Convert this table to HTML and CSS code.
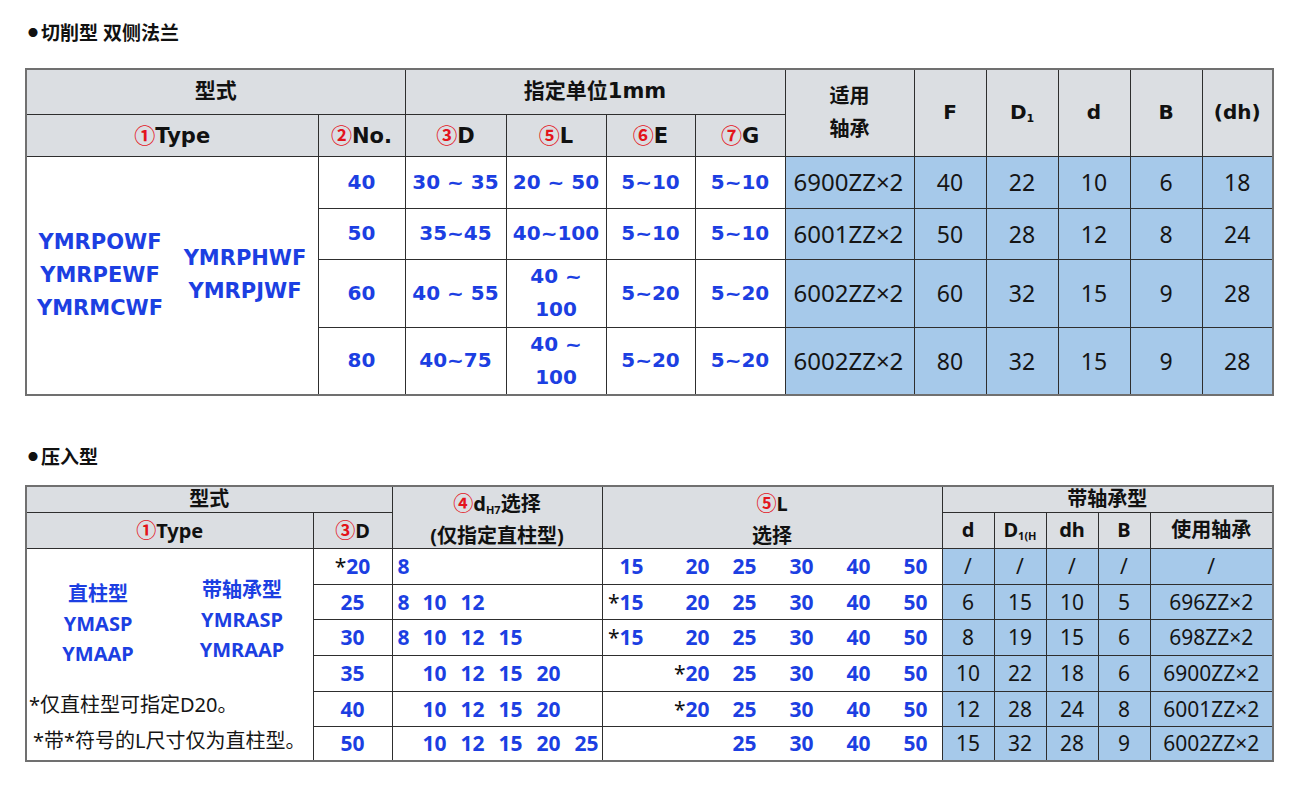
FILE: index.html
```html
<!DOCTYPE html>
<html lang="zh">
<head>
<meta charset="utf-8">
<title>切削型 双侧法兰 / 压入型</title>
<link rel="stylesheet" href="styles.css">
</head>
<body>
<div class="page">
  <div class="title"><span class="dot">●</span>切削型 双侧法兰</div>
  <table class="t1">
    <colgroup>
      <col class="c-type"><col class="c-no"><col class="c-d"><col class="c-l"><col class="c-e"><col class="c-g"><col class="c-bear"><col class="c-s"><col class="c-s"><col class="c-s"><col class="c-s"><col class="c-s2">
    </colgroup>
    <tr class="h1">
      <th colspan="2">型式</th>
      <th colspan="4">指定单位1mm</th>
      <th rowspan="2" class="two">适用<br>轴承</th>
      <th rowspan="2">F</th>
      <th rowspan="2">D<sub>1</sub></th>
      <th rowspan="2">d</th>
      <th rowspan="2">B</th>
      <th rowspan="2">(dh)</th>
    </tr>
    <tr class="h2">
      <th><span class="num">①</span>Type</th>
      <th><span class="num">②</span>No.</th>
      <th><span class="num">③</span>D</th>
      <th><span class="num">⑤</span>L</th>
      <th><span class="num">⑥</span>E</th>
      <th><span class="num">⑦</span>G</th>
    </tr>
    <tr class="r1">
      <td rowspan="4" class="models">
        <div class="mgrid">
          <div class="mcol left">YMRPOWF<br>YMRPEWF<br>YMRMCWF</div>
          <div class="mcol right">YMRPHWF<br>YMRPJWF</div>
        </div>
      </td>
      <td class="v">40</td><td class="v">30 ~ 35</td><td class="v">20 ~ 50</td><td class="v">5~10</td><td class="v">5~10</td>
      <td class="bear">6900ZZ×2</td><td class="b">40</td><td class="b">22</td><td class="b">10</td><td class="b">6</td><td class="b">18</td>
    </tr>
    <tr class="r2">
      <td class="v">50</td><td class="v">35~45</td><td class="v">40~100</td><td class="v">5~10</td><td class="v">5~10</td>
      <td class="bear">6001ZZ×2</td><td class="b">50</td><td class="b">28</td><td class="b">12</td><td class="b">8</td><td class="b">24</td>
    </tr>
    <tr class="r3">
      <td class="v">60</td><td class="v">40 ~ 55</td><td class="v tall">40 ~<br>100</td><td class="v">5~20</td><td class="v">5~20</td>
      <td class="bear">6002ZZ×2</td><td class="b">60</td><td class="b">32</td><td class="b">15</td><td class="b">9</td><td class="b">28</td>
    </tr>
    <tr class="r3">
      <td class="v">80</td><td class="v">40~75</td><td class="v tall">40 ~<br>100</td><td class="v">5~20</td><td class="v">5~20</td>
      <td class="bear">6002ZZ×2</td><td class="b">80</td><td class="b">32</td><td class="b">15</td><td class="b">9</td><td class="b">28</td>
    </tr>
  </table>

  <div class="title second"><span class="dot small">●</span>压入型</div>
  <table class="t2">
    <colgroup>
      <col class="k-type"><col class="k-d"><col class="k-dh"><col class="k-l"><col class="k-s"><col class="k-s"><col class="k-s"><col class="k-s"><col class="k-bear">
    </colgroup>
    <tr class="g1">
      <th colspan="2">型式</th>
      <th rowspan="2" class="two"><div class="stack"><span class="num">④</span>d<sub>H7</sub>选择<br>(仅指定直柱型)</div></th>
      <th rowspan="2" class="two"><div class="stack"><span class="num">⑤</span>L<br>选择</div></th>
      <th colspan="5">带轴承型</th>
    </tr>
    <tr class="g2">
      <th><span class="num">①</span>Type</th>
      <th><span class="num">③</span>D</th>
      <th>d</th>
      <th>D<sub>1(H</sub></th>
      <th>dh</th>
      <th>B</th>
      <th>使用轴承</th>
    </tr>
    <tr class="q36">
      <td rowspan="6" class="types">
        <div class="tbox">
          <div class="tmodels">
            <div class="tcol tleft">直柱型<br>YMASP<br>YMAAP</div>
            <div class="tcol tright">带轴承型<br>YMRASP<br>YMRAAP</div>
          </div>
          <div class="note n1">*仅直柱型可指定D20。</div>
          <div class="note n2">*带*符号的L尺寸仅为直柱型。</div>
        </div>
      </td>
      <td class="dv"><span class="star">*</span>20</td>
      <td class="dh"><div class="dgrid"><span>8</span></div></td>
      <td class="lv"><div class="lgrid"><span>15</span><span>20</span><span>25</span><span>30</span><span>40</span><span>50</span></div></td>
      <td class="b2">/</td><td class="b2">/</td><td class="b2">/</td><td class="b2">/</td><td class="b2">/</td>
    </tr>
    <tr class="q35">
      <td class="dv">25</td>
      <td class="dh"><div class="dgrid"><span>8</span><span>10</span><span>12</span></div></td>
      <td class="lv"><div class="lgrid"><span><i class="star">*</i>15</span><span>20</span><span>25</span><span>30</span><span>40</span><span>50</span></div></td>
      <td class="b2">6</td><td class="b2">15</td><td class="b2">10</td><td class="b2">5</td><td class="b2">696ZZ×2</td>
    </tr>
    <tr class="q36">
      <td class="dv">30</td>
      <td class="dh"><div class="dgrid"><span>8</span><span>10</span><span>12</span><span>15</span></div></td>
      <td class="lv"><div class="lgrid"><span><i class="star">*</i>15</span><span>20</span><span>25</span><span>30</span><span>40</span><span>50</span></div></td>
      <td class="b2">8</td><td class="b2">19</td><td class="b2">15</td><td class="b2">6</td><td class="b2">698ZZ×2</td>
    </tr>
    <tr class="q36">
      <td class="dv">35</td>
      <td class="dh"><div class="dgrid"><span></span><span>10</span><span>12</span><span>15</span><span>20</span></div></td>
      <td class="lv"><div class="lgrid"><span></span><span><i class="star">*</i>20</span><span>25</span><span>30</span><span>40</span><span>50</span></div></td>
      <td class="b2">10</td><td class="b2">22</td><td class="b2">18</td><td class="b2">6</td><td class="b2">6900ZZ×2</td>
    </tr>
    <tr class="q35">
      <td class="dv">40</td>
      <td class="dh"><div class="dgrid"><span></span><span>10</span><span>12</span><span>15</span><span>20</span></div></td>
      <td class="lv"><div class="lgrid"><span></span><span><i class="star">*</i>20</span><span>25</span><span>30</span><span>40</span><span>50</span></div></td>
      <td class="b2">12</td><td class="b2">28</td><td class="b2">24</td><td class="b2">8</td><td class="b2">6001ZZ×2</td>
    </tr>
    <tr class="q35">
      <td class="dv">50</td>
      <td class="dh"><div class="dgrid"><span></span><span>10</span><span>12</span><span>15</span><span>20</span><span>25</span></div></td>
      <td class="lv"><div class="lgrid"><span></span><span></span><span>25</span><span>30</span><span>40</span><span>50</span></div></td>
      <td class="b2">15</td><td class="b2">32</td><td class="b2">28</td><td class="b2">9</td><td class="b2">6002ZZ×2</td>
    </tr>
  </table>
</div>
</body>
</html>
```

FILE: styles.css
```css
* { box-sizing: border-box; }

body {
  margin: 0;
  background: #ffffff;
  color: #111111;
  font-family: "DejaVu Sans", "Noto Sans CJK SC", sans-serif;
}

.page {
  padding: 20px 0 0 25px;
}

.title {
  font-family: "Noto Sans", "Noto Sans CJK SC", sans-serif;
  font-size: 19px;
  font-weight: 700;
  line-height: 26px;
  height: 26px;
  padding-left: 3px;
}

.title .dot {
  font-size: 10px;
  vertical-align: 3px;
  margin-right: 3px;
}

.title.second {
  margin-top: 48px;
}

.num {
  color: #e3141c;
  font-family: "Noto Sans CJK SC", sans-serif;
  font-weight: 700;
}

table {
  border-collapse: collapse;
  table-layout: fixed;
  width: 1247px;
  border: 2px solid #707070;
}

th, td {
  border: 1px solid #2e2e2e;
  padding: 0;
  text-align: center;
  vertical-align: middle;
}

th {
  background: #dbdee2;
  font-weight: 700;
  color: #111111;
}

sub {
  font-size: 11px;
  vertical-align: -3px;
  line-height: 0;
}

/* ---------- top table ---------- */
.t1 {
  margin-top: 22px;
}

.t1 .c-type { width: 292px; }
.t1 .c-no { width: 87px; }
.t1 .c-d { width: 101px; }
.t1 .c-l { width: 100px; }
.t1 .c-e { width: 89px; }
.t1 .c-g { width: 90px; }
.t1 .c-bear { width: 129px; }
.t1 .c-s { width: 72px; }
.t1 .c-s2 { width: 71px; }

.t1 th {
  font-size: 20px;
  line-height: 33px;
}

.t1 .h1 th:first-child,
.t1 .h1 th:nth-child(2) {
  font-size: 21px;
}

.t1 .h1 { height: 45px; }
.t1 .h2 { height: 42px; }
.t1 .h2 th { font-size: 21px; }
.t1 .r1 { height: 52px; }
.t1 .r2 { height: 51px; }
.t1 .r3 { height: 68px; }

.t1 .v {
  color: #1c3fe2;
  font-weight: 700;
  font-size: 20px;
  line-height: 33px;
  white-space: nowrap;
}

.t1 .bear {
  background: #a6c9ea;
  text-align: left;
  padding-left: 8px;
  font-family: "Noto Sans", sans-serif;
  font-size: 24px;
  line-height: 30px;
  color: #151515;
  white-space: nowrap;
}

.t1 .b {
  background: #a6c9ea;
  font-family: "Noto Sans", sans-serif;
  font-size: 23px;
  line-height: 30px;
  color: #151515;
}

.t1 .models {
  background: #ffffff;
}

.mgrid {
  display: flex;
  align-items: center;
  padding-left: 3px;
  gap: 10px;
}

.mcol {
  color: #1c3fe2;
  font-weight: 700;
  font-size: 21px;
  line-height: 33px;
  text-align: center;
}

.mcol.left { width: 140px; }
.mcol.right { width: 130px; }

/* ---------- bottom table ---------- */
.t2 {
  margin-top: 15px;
  font-family: "Noto Sans", "Noto Sans CJK SC", sans-serif;
}

.t2 .k-type { width: 287px; }
.t2 .k-d { width: 79px; }
.t2 .k-dh { width: 210px; }
.t2 .k-l { width: 340px; }
.t2 .k-s { width: 52px; }
.t2 .k-bear { width: 123px; }

.t2 th {
  font-size: 20px;
  line-height: 26px;
}

.t2 .g1 { height: 26px; }
.t2 .g2 { height: 36px; }
.t2 .q36 { height: 36px; }
.t2 .q35 { height: 35px; }

.t2 .g1 th { line-height: 20px; }

.stack {
  height: 54px;
  line-height: 32px;
  overflow: visible;
  margin-top: -6px;
}

.t2 .dv {
  color: #1c3fe2;
  font-weight: 700;
  font-size: 21px;
  line-height: 28px;
}

.star {
  color: #111111;
  font-style: normal;
  font-weight: 400;
}

.t2 .dh {
  text-align: left;
  padding-left: 5px;
}

.dgrid {
  display: grid;
  grid-template-columns: 25px repeat(5, 38px);
  color: #1c3fe2;
  font-weight: 700;
  font-size: 21px;
  line-height: 28px;
}

.lgrid {
  display: grid;
  grid-template-columns: 41px 66px 47px 57px 57px 57px;
  justify-items: end;
  color: #1c3fe2;
  font-weight: 700;
  font-size: 21px;
  line-height: 28px;
}

.t2 .b2 {
  background: #a6c9ea;
  font-size: 21px;
  line-height: 28px;
  color: #151515;
  white-space: nowrap;
}

.t2 .types {
  vertical-align: top;
  text-align: left;
}

.tbox {
  height: 208px;
  overflow: hidden;
}

.tmodels {
  display: flex;
  align-items: flex-start;
  padding-top: 26px;
  padding-left: 21px;
  gap: 44px;
}

.tcol {
  width: 100px;
  text-align: center;
  color: #1c3fe2;
  font-weight: 700;
  font-size: 20px;
  line-height: 30px;
}

.tcol.tleft { margin-top: 4px; }

.note {
  font-size: 20px;
  color: #151515;
  white-space: nowrap;
}

.note.n1 {
  margin-top: 18px;
  line-height: 36px;
  padding-left: 2px;
}

.note.n2 {
  line-height: 36px;
  padding-left: 6px;
}
```
